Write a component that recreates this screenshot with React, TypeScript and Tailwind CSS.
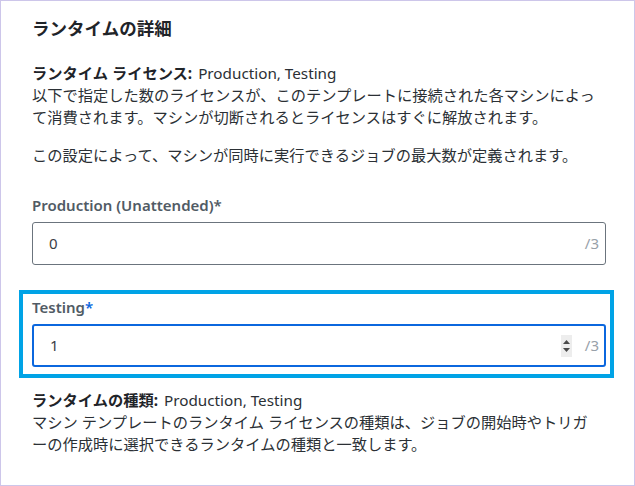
import React from "react";

const font = { fontFamily: '"Noto Sans", "Noto Sans CJK JP", sans-serif' };

function Spinner() {
  return (
    <div className="flex h-[22px] w-[11px] flex-col items-center justify-center gap-[4px] bg-[#ededed]">
      <svg width="7" height="4" viewBox="0 0 7 4">
        <path d="M3.5 0 L7 4 L0 4 Z" fill="#4a4a4a" />
      </svg>
      <svg width="7" height="4" viewBox="0 0 7 4">
        <path d="M0 0 L7 0 L3.5 4 Z" fill="#4a4a4a" />
      </svg>
    </div>
  );
}

function CountInput({ value, focused }: { value: string; focused?: boolean }) {
  return (
    <div
      className={
        focused
          ? "mt-[6px] flex h-[43px] w-[574px] items-center rounded-[3px] border-2 border-[#0b67de] pl-[16px] pr-[5px]"
          : "mt-[6px] flex h-[43px] w-[574px] items-center rounded-[3px] border border-[#6b747d] pl-[16px] pr-[6px]"
      }
    >
      <span className="flex-1 text-[15px] text-[#3b4046]">{value}</span>
      {focused && <Spinner />}
      <span className={focused ? "ml-[13px] text-[15px] text-[#98a1a9]" : "text-[15px] text-[#98a1a9]"}>/3</span>
    </div>
  );
}

export default function App() {
  return (
    <div
      lang="ja"
      style={font}
      className="h-[486px] w-[635px] overflow-hidden border border-[#cdc6ea] bg-white pl-[31px] pt-[15px] text-[#2b3035] [line-break:loose]"
    >
      <h2 className="text-[17.5px] font-bold leading-[24px] text-[#1f2429]">ランタイムの詳細</h2>

      <p className="mt-[22px] w-[574px] text-[15.25px] leading-[22px]">
        <span className="font-bold text-[#1f2429]">ランタイム ライセンス:</span>
        <span className="ml-[6px]">Production, Testing</span>
        <br />
        以下で指定した数のライセンスが、このテンプレートに接続された各マシンによって消費されます。マシンが切断されるとライセンスはすぐに解放されます。
      </p>
      <p className="mt-4 w-[574px] text-[15.25px] leading-[22px]">
        この設定によって、マシンが同時に実行できるジョブの最大数が定義されます。
      </p>

      <div className="mt-[28px] text-[15px] font-semibold leading-[22px] text-[#515b65]">
        Production (Unattended)*
      </div>
      <CountInput value="0" />

      <div className="-ml-[13px] mt-[25px] w-[595px] border-4 border-[#00a3e6] pb-[7px] pl-[9px] pt-[2px]">
        <div className="text-[15px] font-semibold leading-[22px] text-[#515b65]">
          Testing<span className="text-[#0b67de]">*</span>
        </div>
        <CountInput value="1" focused />
      </div>

      <p className="mt-[11px] w-[574px] text-[15.25px] leading-[22px]">
        <span className="font-bold text-[#1f2429]">ランタイムの種類:</span>
        <span className="ml-[6px]">Production, Testing</span>
        <br />
        マシン テンプレートのランタイム ライセンスの種類は、ジョブの開始時やトリガ
        <br />
        ーの作成時に選択できるランタイムの種類と一致します。
      </p>
    </div>
  );
}
